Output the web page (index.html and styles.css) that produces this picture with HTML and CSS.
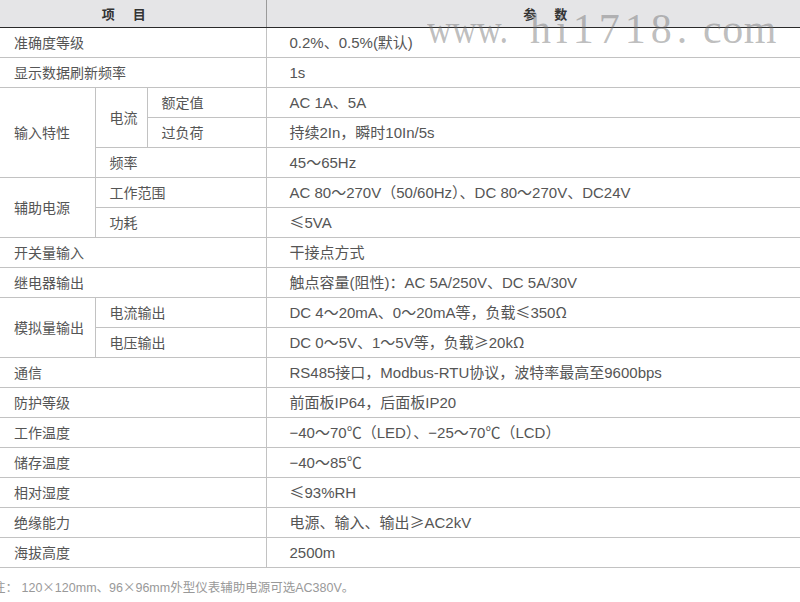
FILE: index.html
```html
<!DOCTYPE html>
<html lang="zh">
<head>
<meta charset="utf-8">
<title>技术参数</title>
<link rel="stylesheet" href="styles.css">
</head>
<body>
<div class="page">
  <table class="spec">
    <colgroup>
      <col class="c1"><col class="c2"><col class="c3"><col class="c4">
    </colgroup>
    <thead>
      <tr>
        <th colspan="3" class="h-item">项<span class="sp"></span>目</th>
        <th class="h-param">参<span class="sp"></span>数</th>
      </tr>
    </thead>
    <tbody>
      <tr><td colspan="3">准确度等级</td><td class="val">0.2%、0.5%(默认)</td></tr>
      <tr><td colspan="3">显示数据刷新频率</td><td class="val">1s</td></tr>
      <tr><td rowspan="3">输入特性</td><td rowspan="2">电流</td><td>额定值</td><td class="val">AC 1A、5A</td></tr>
      <tr><td>过负荷</td><td class="val">持续2In，瞬时10In/5s</td></tr>
      <tr><td colspan="2">频率</td><td class="val">45～65Hz</td></tr>
      <tr><td rowspan="2">辅助电源</td><td colspan="2">工作范围</td><td class="val">AC 80～270V（50/60Hz）、DC 80～270V、DC24V</td></tr>
      <tr><td colspan="2">功耗</td><td class="val"><span class="cjk">≤</span>5VA</td></tr>
      <tr><td colspan="3">开关量输入</td><td class="val">干接点方式</td></tr>
      <tr><td colspan="3">继电器输出</td><td class="val">触点容量(阻性)：AC 5A/250V、DC 5A/30V</td></tr>
      <tr><td rowspan="2">模拟量输出</td><td colspan="2">电流输出</td><td class="val">DC 4～20mA、0～20mA等，负载<span class="cjk">≤</span>350<span class="cjk">Ω</span></td></tr>
      <tr><td colspan="2">电压输出</td><td class="val">DC 0～5V、1～5V等，负载<span class="cjk">≥</span>20k<span class="cjk">Ω</span></td></tr>
      <tr><td colspan="3">通信</td><td class="val">RS485接口，Modbus-RTU协议，波特率最高至9600bps</td></tr>
      <tr><td colspan="3">防护等级</td><td class="val">前面板IP64，后面板IP20</td></tr>
      <tr><td colspan="3">工作温度</td><td class="val">−40～70℃（LED）、−25～70℃（LCD）</td></tr>
      <tr><td colspan="3">储存温度</td><td class="val">−40～85℃</td></tr>
      <tr><td colspan="3">相对湿度</td><td class="val"><span class="cjk">≤</span>93%RH</td></tr>
      <tr><td colspan="3">绝缘能力</td><td class="val">电源、输入、输出<span class="cjk">≥</span>AC2kV</td></tr>
      <tr><td colspan="3">海拔高度</td><td class="val">2500m</td></tr>
    </tbody>
  </table>
  <p class="note">注： 120<span class="cjk">×</span>120mm、96<span class="cjk">×</span>96mm外型仪表辅助电源可选AC380V。</p>
  <div class="watermark"><span class="w1">www.</span><span class="w2">hi1718.</span><span class="w3">com</span></div>
</div>
</body>
</html>
```
FILE: styles.css
```css
html, body {
  margin: 0;
  padding: 0;
  background: #ffffff;
}
.page {
  position: relative;
  width: 800px;
  height: 602px;
  overflow: hidden;
  font-family: "Liberation Sans", "Noto Sans CJK SC", sans-serif;
}
.spec {
  width: 800px;
  border-collapse: collapse;
  table-layout: fixed;
  font-size: 14px;
  color: #555555;
}
.c1 { width: 95px; }
.c2 { width: 52px; }
.c3 { width: 119px; }
.c4 { width: 534px; }
.spec th {
  height: 27px;
  padding: 0;
  background: #e5e5e7;
  border-bottom: 1px solid #2a2a2a;
  font-family: "Noto Sans CJK SC", sans-serif;
  font-size: 13px;
  font-weight: 700;
  color: #333333;
  line-height: 27px;
  text-align: center;
}
.spec th.h-item {
  padding-right: 18px;
  border-right: 1px solid #9a9a9a;
}
.spec th.h-param {
  padding-left: 24px;
}
.sp {
  display: inline-block;
  width: 18px;
}
.spec td {
  height: 29px;
  padding: 0 0 0 14px;
  border-bottom: 1px solid #c2c2c2;
  border-right: 1px solid #c2c2c2;
  line-height: 20px;
  vertical-align: middle;
  white-space: nowrap;
}
.spec td.val {
  padding-left: 23px;
  border-left: 1px solid #9a9a9a;
  border-right: none;
  font-size: 15px;
}
.note {
  margin: 10px 0 0 -7px;
  font-size: 12.5px;
  line-height: 18px;
  color: #999999;
}
.cjk {
  font-family: "Noto Sans CJK SC", sans-serif;
}
.watermark {
  position: absolute;
  left: 427px;
  top: 8px;
  display: flex;
  font-family: "Liberation Serif", serif;
  font-size: 42px;
  line-height: 42px;
  color: rgba(110, 110, 110, 0.45);
  white-space: nowrap;
  pointer-events: none;
}
.w1 {
  display: inline-block;
  width: 103px;
  transform: scaleX(0.82);
  transform-origin: left center;
}
.w2 { width: 173px; letter-spacing: 5px; }
.w3 { letter-spacing: 0.5px; }
```
